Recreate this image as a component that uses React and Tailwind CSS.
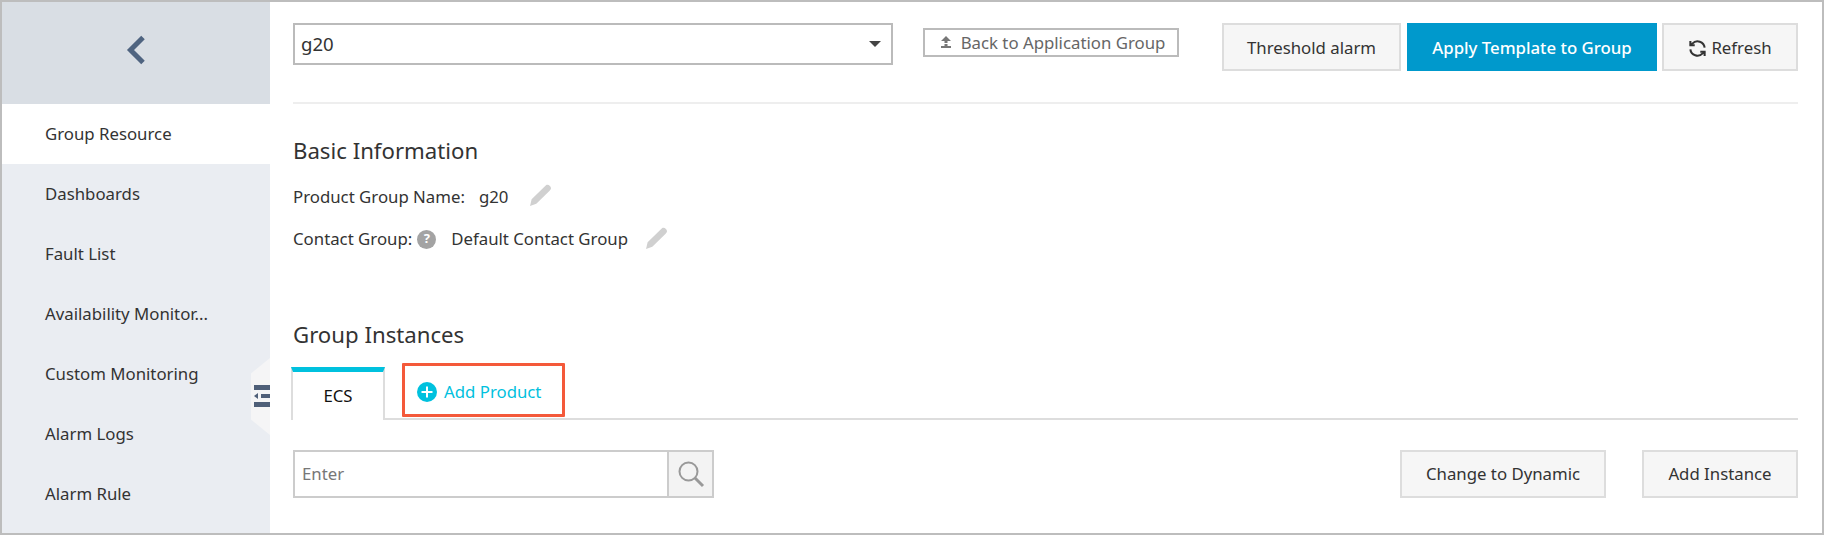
import React from "react";

const Pencil = () => (
  <svg width="23" height="23" viewBox="0 0 22 22" className="shrink-0">
    <path d="M1 21 L2.5 14.5 L15 2.5 L16.5 1 C17.5 0.5 19 0.8 20 1.8 C21 2.8 21.3 4 20.8 5 L19.5 6.8 L7 19 Z" fill="#d0d0d0" />
  </svg>
);

const Btn = ({ children, w }) => (
  <button className={`h-12 ${w} flex items-center justify-center bg-[#f6f6f6] border-2 border-[#dddddd] text-[16.8px] text-[#333333]`}>
    {children}
  </button>
);

const items = ["Group Resource", "Dashboards", "Fault List", "Availability Monitor...", "Custom Monitoring", "Alarm Logs", "Alarm Rule"];

export default function App() {
  return (
    <div className="w-[1824px] h-[535px] border-2 border-[#bdbdbd] flex overflow-hidden bg-white font-['Noto_Sans',sans-serif] text-[#333333]">
      <aside className="w-[268px] shrink-0 bg-[#eaedf2] flex flex-col relative">
        <div className="h-[102px] pb-[7px] shrink-0 bg-[#d9dee4] flex items-center justify-center">
          <svg width="20" height="30" viewBox="0 0 20 30">
            <path d="M17 2.5 L4.5 15 L17 27.5" fill="none" stroke="#4f6480" strokeWidth="5" />
          </svg>
        </div>
        {items.map((t, i) => (
          <div key={t} className={`h-[60px] shrink-0 flex items-center pl-[43px] text-[16.8px] ${i === 0 ? "bg-white" : ""}`}>{t}</div>
        ))}
        <div className="absolute left-[249px] top-[356px] w-[19px] h-[77px] bg-[#f5f5f6] [clip-path:polygon(100%_0,100%_100%,0_80%,0_20%)]">
          <svg width="16" height="22" viewBox="0 0 16 22" className="absolute left-[3px] top-[27px]">
            <path d="M0 0H16V5H0ZM0 17H16V22H0ZM7 9H16V13H7Z" fill="#4f5f78" />
            <path d="M0 11 L4 8V14Z" fill="#4f5f78" />
          </svg>
        </div>
      </aside>

      <main className="flex-1 pl-[23px] pr-[24px] flex flex-col">
        <div className="h-[81px] mt-[21px] shrink-0 border-b-2 border-[#eeeeee] flex items-start">
          <div className="w-[600px] h-[42px] border-2 border-[#bbbbbb] flex items-center justify-between pl-[6px] pr-[10px] text-[18.6px]">
            <span>g20</span>
            <span className="w-0 h-0 border-x-[6px] border-x-transparent border-t-[6px] border-t-[#444444]" />
          </div>
          <button className="ml-[30px] mt-[5px] w-[256px] h-[29px] border-2 border-[#bbbbbb] flex items-center justify-center gap-[9px] pl-[3px] text-[16.8px] text-[#666666]">
            <svg width="12" height="13" viewBox="0 0 12 13">
              <path d="M6 0 L11 5H7.5V7H4.5V5H1Z M4.5 8H7.5V10H11V12H1V10H4.5Z" fill="#777777" />
            </svg>
            Back to Application Group
          </button>
          <div className="ml-auto flex">
            <button className="h-12 w-[179px] pt-[2px] flex items-center justify-center bg-[#f6f6f6] border-2 border-[#dddddd] text-[16.8px] text-[#333333]">Threshold alarm</button>
            <button className="ml-[6px] w-[250px] h-12 pt-[2px] bg-[#0099cc] text-white text-[16.8px] font-medium">Apply Template to Group</button>
            <button className="ml-[5px] w-[136px] h-12 pt-[2px] flex items-center justify-center gap-[4px] bg-[#f6f6f6] border-2 border-[#dddddd] text-[16.8px]">
              <svg width="19" height="19" viewBox="0 0 24 24" fill="none" stroke="#333333" strokeWidth="2.6">
                <path d="M21 11a9 9 0 0 0-15.5-5.2L3 8" />
                <path d="M3 2.5V8h5.5" />
                <path d="M3 13a9 9 0 0 0 15.5 5.2L21 16" />
                <path d="M21 21.5V16h-5.5" />
              </svg>
              Refresh
            </button>
          </div>
        </div>

        <h2 className="mt-[33px] text-[22.2px] leading-[28px] font-normal">Basic Information</h2>
        <div className="mt-[20px] h-[24px] flex items-center text-[16.8px]">
          <span>Product Group Name:</span>
          <span className="ml-[14px]">g20</span>
          <span className="ml-[21px] mt-[-4px]"><Pencil /></span>
        </div>
        <div className="mt-[18px] h-[24px] flex items-center text-[16.8px]">
          <span>Contact Group:</span>
          <span className="ml-[5px] w-[19px] h-[19px] rounded-full bg-[#a3a3a3] text-white text-[13px] font-bold flex items-center justify-center">?</span>
          <span className="ml-[15px]">Default Contact Group</span>
          <span className="ml-[17px] mt-[-2px]"><Pencil /></span>
        </div>

        <h2 className="mt-[70px] text-[22.2px] leading-[28px] font-normal">Group Instances</h2>

        <div className="mt-[12px] h-[59px] shrink-0 relative flex items-end border-b-2 border-[#dddddd]">
          <div className="ml-[-2px] mb-[-2px] w-[94px] h-[53px] bg-white border-t-[5px] border-t-[#00c1de] border-x-2 border-x-[#dddddd] flex items-center justify-center text-[16.8px] text-[#111111]">ECS</div>
          <div className="ml-[17px] mb-[1px] w-[163px] h-[54px] pt-[3px] border-[3px] border-[#f4593a] rounded-[1px] flex items-center pl-[12px] text-[#00c1de] text-[16.8px]">
            <svg width="20" height="20" viewBox="0 0 20 20">
              <circle cx="10" cy="10" r="10" fill="#00c1de" />
              <path d="M9 4.5H11V9H15.5V11H11V15.5H9V11H4.5V9H9Z" fill="#ffffff" />
            </svg>
            <span className="ml-[7px]">Add Product</span>
          </div>
        </div>

        <div className="mt-[30px] flex items-start">
          <div className="w-[374px] h-12 border-2 border-r-0 border-[#cccccc] flex items-center pl-[7px] text-[16.8px] text-[#777777]">Enter</div>
          <div className="w-[47px] h-12 border-2 border-[#cccccc] bg-[#f3f3f3] flex items-center justify-center">
            <svg width="28" height="28" viewBox="0 0 28 28" fill="none" stroke="#999999" strokeWidth="2">
              <circle cx="11.5" cy="11.5" r="9" />
              <path d="M18 18L26 26" strokeWidth="3" />
            </svg>
          </div>
          <div className="ml-auto flex gap-9">
            <Btn w="w-[206px]">Change to Dynamic</Btn>
            <Btn w="w-[156px]">Add Instance</Btn>
          </div>
        </div>
      </main>
    </div>
  );
}
